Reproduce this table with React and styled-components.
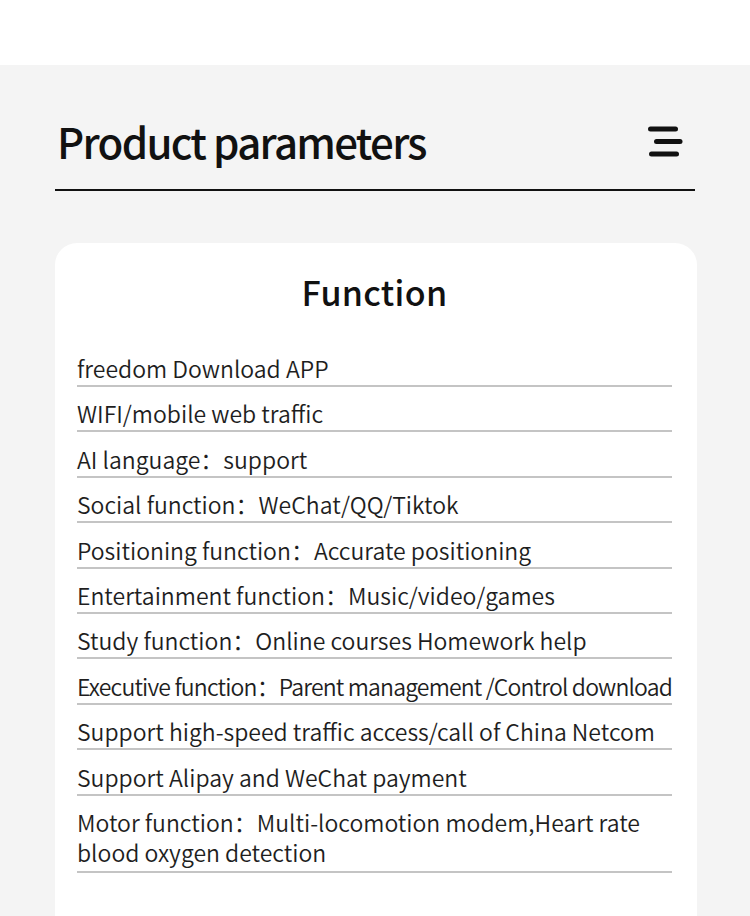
import React from "react";
import styled, { createGlobalStyle } from "styled-components";

const GlobalStyle = createGlobalStyle`
  html, body {
    margin: 0;
    padding: 0;
    background: #ffffff;
  }
  body {
    font-family: "Noto Sans CJK SC", "Noto Sans", sans-serif;
    color: #1a1a1a;
  }
`;

const Page = styled.div`
  padding-top: 65px;
  background: #ffffff;
`;

const Section = styled.section`
  background: #f4f4f4;
  padding: 55px 53px 0 55px;
  min-height: 851px;
  box-sizing: border-box;
`;

const Header = styled.header`
  display: flex;
  align-items: center;
  justify-content: space-between;
  margin-right: 2px;
  padding: 0 12px 27px 2px;
  border-bottom: 2px solid #111111;
`;

const Title = styled.h1`
  margin: 0;
  font-size: 42px;
  font-weight: 500;
  letter-spacing: -1.7px;
  color: #111111;
  line-height: 1;
`;

const MenuIcon = () => (
  <svg width="36" height="32" viewBox="0 0 36 32">
    <g stroke="#111" strokeWidth="5" strokeLinecap="round">
      <line x1="3.5" y1="4" x2="28.5" y2="4" />
      <line x1="9.5" y1="16.5" x2="33" y2="16.5" />
      <line x1="4.5" y1="29" x2="29.5" y2="29" />
    </g>
  </svg>
);

const Card = styled.div`
  margin-top: 52px;
  background: #ffffff;
  border-radius: 22px;
  padding: 24px 25px 40px 22px;
  min-height: 700px;
`;

const CardTitle = styled.h2`
  margin: 0 0 37px;
  text-align: center;
  font-size: 34px;
  font-weight: 500;
  color: #111111;
  letter-spacing: 0.3px;
`;

const List = styled.ul`
  list-style: none;
  margin: 0;
  padding: 0;
`;

const Row = styled.li`
  font-size: 23px;
  line-height: 30px;
  font-weight: 350;
  color: #1e1e1e;
  padding: ${(p) => (p.$first ? "0" : "11.4px")} 0 ${(p) => (p.$last ? "4px" : "2px")};
  border-bottom: 2px solid #c4c4c4;
  letter-spacing: ${(p) => (p.$tight ? "-0.83px" : "0")};
  white-space: ${(p) => (p.$tight ? "nowrap" : "normal")};
`;

const rows = [
  "freedom Download APP",
  "WIFI/mobile web traffic",
  "AI language：support",
  "Social function：WeChat/QQ/Tiktok",
  "Positioning function：Accurate positioning",
  "Entertainment function：Music/video/games",
  "Study function：Online courses Homework help",
  "Executive function：Parent management /Control download",
  "Support high-speed traffic access/call of China Netcom",
  "Support Alipay and WeChat payment",
  "Motor function：Multi-locomotion modem,Heart rate blood oxygen detection",
];

export default function App() {
  return (
    <Page>
      <GlobalStyle />
      <Section>
        <Header>
          <Title>Product parameters</Title>
          <MenuIcon />
        </Header>
        <Card>
          <CardTitle>Function</CardTitle>
          <List>
            {rows.map((r, i) => (
              <Row
                key={i}
                $first={i === 0}
                $last={i === rows.length - 1}
                $tight={i === 7}
              >
                {r}
              </Row>
            ))}
          </List>
        </Card>
      </Section>
    </Page>
  );
}
